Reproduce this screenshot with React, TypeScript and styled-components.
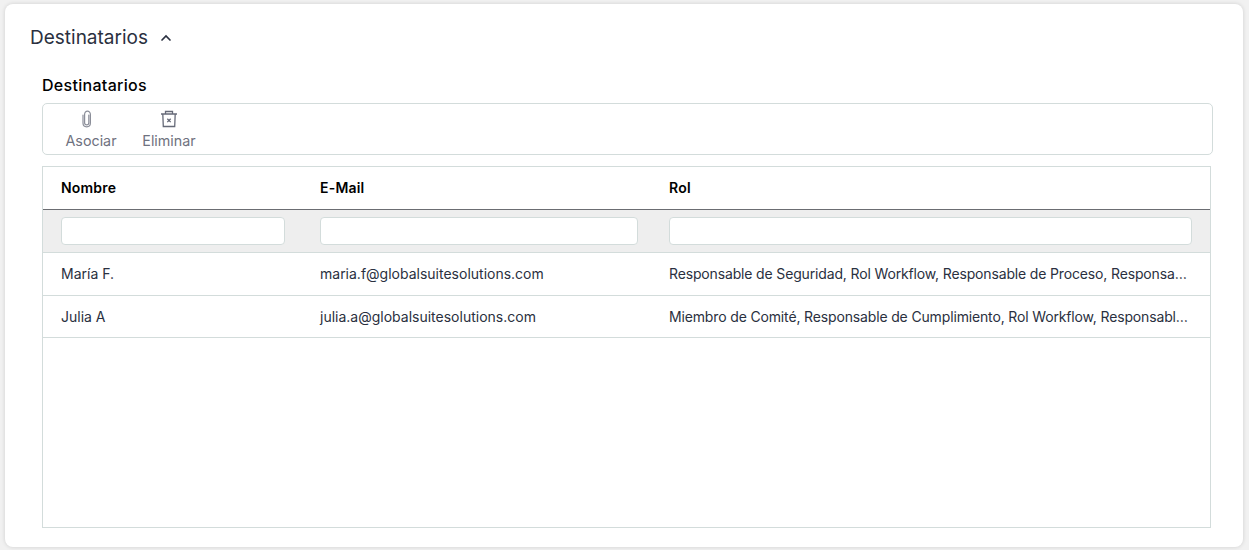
import * as React from "react";
import styled, { createGlobalStyle } from "styled-components";

type Person = {
  name: string;
  email: string;
  roles: string;
};

const people: Person[] = [
  {
    name: "María F.",
    email: "maria.f@globalsuitesolutions.com",
    roles:
      "Responsable de Seguridad, Rol Workflow, Responsable de Proceso, Responsable de Cumplimiento, Responsable de Riesgos",
  },
  {
    name: "Julia A",
    email: "julia.a@globalsuitesolutions.com",
    roles:
      "Miembro de Comité, Responsable de Cumplimiento, Rol Workflow, Responsable de Seguridad, Responsable de Riesgos",
  },
];

const ClipIcon = () => (
  <svg width="18" height="18" viewBox="0 0 18 18" fill="none" stroke="#8b8e99" strokeWidth="1.2" strokeLinecap="round">
    <path
      transform="translate(-4 0)"
      d="M5 5v8c0 2.200 1.600 3.800 3.700 3.800s3.700-1.600 3.700-3.800V4.400C12.400 2.600 11.100 1.200 9.400 1.200S6.600 2.600 6.600 4.400v8.400c0 1.200.9 2.100 2.100 2.100s2.100-.9 2.100-2.100V5"
    />
  </svg>
);

const TrashIcon = () => (
  <svg width="18" height="18" viewBox="0 0 18 18" fill="none" stroke="#666a78" strokeWidth="1.3">
    <path d="M1 4h16M5.500 4V1.500h7V4M2.800 4l.5 12.500h11.400L15.200 4" />
    <path d="M7.300 8.700l3.400 3.400M10.700 8.700l-3.400 3.400" strokeWidth="1.300" />
  </svg>
);

const ChevronIcon = () => (
  <svg width="12" height="8" viewBox="0 0 12 8" fill="none" stroke="#2a3040" strokeWidth="1.700" strokeLinecap="round">
    <path d="M2 6l4-4 4 4" />
  </svg>
);

export default function App() {
  return (
    <>
      <GlobalStyle />
      <Card>
        <SectionHeader>
          <SectionTitle>Destinatarios</SectionTitle>
          <ChevronIcon />
        </SectionHeader>
        <Body>
          <BlockLabel>Destinatarios</BlockLabel>
          <Toolbar>
            <ToolButton>
              <ClipIcon />
              <ToolLabel>Asociar</ToolLabel>
            </ToolButton>
            <ToolButton>
              <TrashIcon />
              <ToolLabel>Eliminar</ToolLabel>
            </ToolButton>
          </Toolbar>
          <Table>
            <HeadRow>
              <HeadCell>Nombre</HeadCell>
              <HeadCell>E-Mail</HeadCell>
              <HeadCell>Rol</HeadCell>
            </HeadRow>
            <FilterRow>
              <Cell>
                <FilterInput />
              </Cell>
              <Cell>
                <FilterInput />
              </Cell>
              <Cell>
                <FilterInput />
              </Cell>
            </FilterRow>
            {people.map((person) => (
              <DataRow key={person.email}>
                <Cell>{person.name}</Cell>
                <Cell>{person.email}</Cell>
                <RoleCell>{person.roles}</RoleCell>
              </DataRow>
            ))}
          </Table>
        </Body>
      </Card>
    </>
  );
}

const GlobalStyle = createGlobalStyle`
  html, body {
    margin: 0;
    height: 100%;
    background: #f1f1f1;
    overflow: hidden;
  }
  body {
    font-family: Inter, "Liberation Sans", sans-serif;
  }
`;

const Card = styled.div`
  box-sizing: border-box;
  width: 1238px;
  height: 543px;
  margin: 4px 0 0 5px;
  padding: 20px 32px 0 25px;
  background: #ffffff;
  border-radius: 8px;
  box-shadow: 0 0 4px rgba(0, 0, 0, 0.14);
`;

const SectionHeader = styled.div`
  display: flex;
  align-items: center;
  gap: 12px;
  height: 28px;
  color: #2a3040;
`;

const SectionTitle = styled.h2`
  margin: 0;
  font-size: 19px;
  font-weight: 400;
  line-height: 28px;
`;

const Body = styled.div`
  padding: 23px 0 0 12px;
`;

const BlockLabel = styled.div`
  height: 20px;
  margin-bottom: 8px;
  font-size: 16px;
  font-weight: 500;
  letter-spacing: 0.3px;
  line-height: 20px;
  color: #000000;
`;

const Toolbar = styled.div`
  box-sizing: border-box;
  display: flex;
  gap: 20px;
  width: 1171px;
  height: 52px;
  padding: 6px 0 0 19px;
  border: 1px solid #d3dcdb;
  border-radius: 5px;
`;

const ToolButton = styled.div`
  display: flex;
  flex-direction: column;
  align-items: center;
  gap: 4px;
  width: 58px;
`;

const ToolLabel = styled.span`
  font-size: 14.300px;
  line-height: 18px;
  color: #6f7280;
`;

const Table = styled.div`
  box-sizing: border-box;
  width: 1169px;
  height: 362px;
  margin-top: 11px;
  border: 1px solid #d3dcdb;
`;

const Row = styled.div`
  display: grid;
  grid-template-columns: 259px 349px 1fr;
  align-items: center;
`;

const HeadRow = styled(Row)`
  height: 40px;
  padding-bottom: 2px;
  border-bottom: 1px solid #6b6d72;
`;

const FilterRow = styled(Row)`
  height: 42px;
  background: #eeeeee;
  border-bottom: 1px solid #d3dcdb;
`;

const DataRow = styled(Row)`
  height: 41.500px;
  border-bottom: 1px solid #d3dcdb;
`;

const Cell = styled.div`
  min-width: 0;
  padding: 0 18px;
  overflow: hidden;
  font-size: 14px;
  color: #2a3040;
  white-space: nowrap;
  text-overflow: ellipsis;

  &:nth-child(1) {
    padding-right: 17px;
  }

  &:nth-child(2) {
    padding-right: 13px;
  }
`;

const RoleCell = styled(Cell)`
  letter-spacing: -0.15px;
`;

const HeadCell = styled(Cell)`
  font-size: 14px;
  font-weight: 600;
  letter-spacing: 0.2px;
  color: #000000;
`;

const FilterInput = styled.input`
  box-sizing: border-box;
  display: block;
  width: 100%;
  height: 28px;
  background: #ffffff;
  border: 1px solid #d3dcdb;
  border-radius: 4px;
  outline: none;
`;
